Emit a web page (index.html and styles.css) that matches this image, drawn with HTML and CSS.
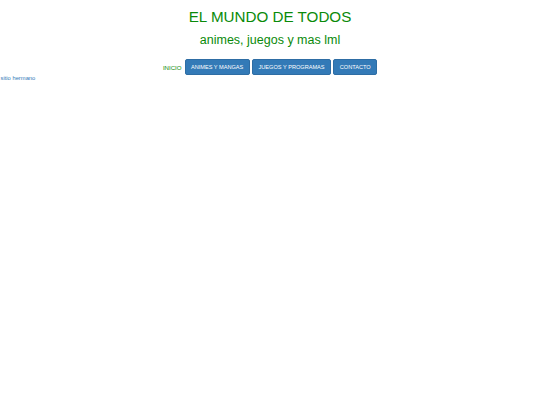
FILE: index.html
```html
<!DOCTYPE html>
<html lang="es">
<head>
<meta charset="utf-8">
<title>El mundo de todos</title>
<link rel="stylesheet" href="styles.css">
</head>
<body>
<header class="header">
  <h1 class="title">EL MUNDO DE TODOS</h1>
  <h2 class="subtitle">animes, juegos y mas lml</h2>
  <nav class="nav">
    <a class="nav-home" href="#">INICIO</a>
    <a class="btn" href="#">ANIMES Y MANGAS</a>
    <a class="btn" href="#">JUEGOS Y PROGRAMAS</a>
    <a class="btn" href="#">CONTACTO</a>
  </nav>
</header>
<a class="sister" href="#">sitio hermano</a>
</body>
</html>
```

FILE: styles.css
```css
html, body {
  margin: 0;
  padding: 0;
  background: #ffffff;
}

body {
  font-family: "Liberation Sans", Arial, Helvetica, sans-serif;
  color: #333333;
}

.header {
  text-align: center;
}

.title {
  margin: 0;
  padding-top: 8px;
  font-size: 15.2px;
  line-height: 18px;
  font-weight: normal;
  color: #0a8a0a;
}

.subtitle {
  margin: 7.4px 0 0;
  font-size: 12.5px;
  line-height: 15px;
  font-weight: normal;
  color: #0a8a0a;
}

.nav {
  display: flex;
  justify-content: center;
  align-items: center;
  gap: 2.5px;
  margin-top: 11px;
}

.nav-home {
  font-size: 6.1px;
  color: #0a8a0a;
  text-decoration: none;
  margin-right: 0.5px;
}

.btn {
  display: inline-block;
  font-size: 5.6px;
  line-height: 8px;
  padding: 3px 5.4px;
  border: 1px solid #2e6da4;
  border-radius: 2px;
  background: #337ab7;
  color: #ffffff;
  text-decoration: none;
}

.sister {
  display: block;
  font-size: 5.8px;
  line-height: 7px;
  margin-left: 0.5px;
  color: #337ab7;
  text-decoration: none;
}
```
